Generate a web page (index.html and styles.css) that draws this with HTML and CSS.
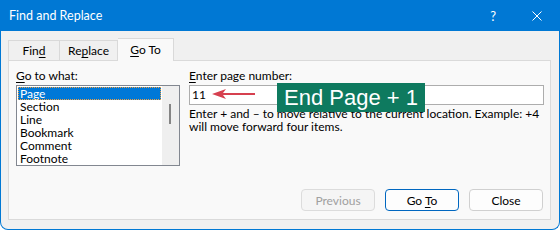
FILE: index.html
```html
<!DOCTYPE html>
<html lang="en">
<head>
  <meta charset="UTF-8" />
  <title>Find and Replace</title>
  <link rel="stylesheet" href="styles.css">
</head>
<body>
  <div class="window">
    <div class="titlebar">
      <span class="title">Find and Replace</span>
      <span class="help">?</span>
      <svg class="close-x" width="10" height="10" viewBox="0 0 10 10">
        <path d="M0.5 0.5 L9.5 9.5 M9.5 0.5 L0.5 9.5" stroke="#fff" stroke-width="1" fill="none" />
      </svg>
    </div>

    <div class="tabs">
      <div class="tab tab-find">Fin<u>d</u></div>
      <div class="tab tab-replace">Re<u>p</u>lace</div>
      <div class="tab active"><u>G</u>o To</div>
    </div>

    <div class="panel">
      <div class="fields">
        <div class="col-left">
          <div class="label"><u>G</u>o to what:</div>
          <div class="listbox">
            <ul class="items">
              <li class="selected">Page</li>
              <li>Section</li>
              <li>Line</li>
              <li>Bookmark</li>
              <li>Comment</li>
              <li>Footnote</li>
            </ul>
            <div class="scrollbar"><div class="thumb"></div></div>
          </div>
        </div>

        <div class="col-right">
          <div class="label"><u>E</u>nter page number:</div>
          <div class="input-wrap">
            <div class="page-input">11</div>
            <!-- annotation on top of the dialog -->
            <svg class="arrow" width="46" height="12" viewBox="0 0 46 12">
              <path d="M1 6 L15 1 L12 5 L44 5 L44 7 L12 7 L15 11 Z" fill="#d6404f" />
            </svg>
            <div class="callout">End Page + 1</div>
          </div>
          <p class="hint">Enter + and &ndash; to move relative to the current location. Example: +4 will move forward four items.</p>
        </div>
      </div>

      <div class="buttons">
        <button class="btn" disabled>Previous</button>
        <button class="btn default">Go <u>T</u>o</button>
        <button class="btn">Close</button>
      </div>
    </div>
  </div>
</body>
</html>
```

FILE: styles.css
```css
body {
  margin: 0;
  padding: 0;
  font-family: Lato, "Noto Sans", sans-serif;
  font-size: 12px;
  color: #000;
  background: #fff;
}
u {
  text-decoration-thickness: 1px;
  text-underline-offset: 2px;
}
.window {
  width: 560px;
  height: 230px;
  box-sizing: border-box;
  border: 1px solid #0078d4;
  border-top: none;
  border-radius: 0 0 8px 8px;
  background: #f0f0f0;
  display: flex;
  flex-direction: column;
  overflow: hidden;
}
.titlebar {
  height: 31px;
  flex: none;
  background: #0078d4;
  color: #fff;
  display: flex;
  align-items: center;
  padding: 0 17px 0 8px;
}
.title {
  flex: 1;
  font-size: 12.5px;
}
.help {
  font-size: 13px;
  margin-right: 36px;
}
.close-x {
  display: block;
}
.tabs {
  display: flex;
  align-items: flex-end;
  margin-top: 7px;
  padding-left: 7px;
  position: relative;
  z-index: 1;
}
.tab {
  height: 20px;
  line-height: 20px;
  box-sizing: border-box;
  border: 1px solid #d9d9d9;
  border-bottom: none;
  text-align: center;
  background: #f0f0f0;
}
.tab-find {
  width: 52px;
}
.tab-replace {
  width: 58px;
  border-left: none;
}
.tab.active {
  width: 56px;
  height: 23px;
  line-height: 22px;
  margin-bottom: -1px;
  border-left: none;
  background: #f9f9f9;
}
.panel {
  flex: 1;
  margin: 0 8px 9px 7px;
  border: 1px solid #dadada;
  background: #f9f9f9;
  padding: 7px 7px 8px 7px;
  display: flex;
  flex-direction: column;
}
.fields {
  display: grid;
  grid-template-columns: 164px 1fr;
  column-gap: 9px;
}
.label {
  line-height: 16px;
  margin-bottom: 1px;
}
.listbox {
  height: 81px;
  box-sizing: border-box;
  border: 1px solid #828790;
  background: #fff;
  display: flex;
}
.items {
  list-style: none;
  margin: 0;
  padding: 1px 0 0 1px;
  flex: 1;
}
.items li {
  height: 13px;
  line-height: 13px;
  padding-left: 2px;
  margin-right: 1px;
}
.items li.selected {
  background: #0078d7;
  color: #fff;
  outline: 1px dotted #f0a040;
  outline-offset: -1px;
}
.scrollbar {
  width: 17px;
  background: #efefef;
  position: relative;
}
.thumb {
  position: absolute;
  left: 7px;
  top: 18px;
  width: 2px;
  height: 20px;
  background: #858585;
}
.input-wrap {
  position: relative;
  margin-right: -1px;
}
.page-input {
  height: 20px;
  box-sizing: border-box;
  border: 1px solid #adadad;
  background: #fff;
  padding-left: 2px;
  line-height: 18px;
}
.arrow {
  position: absolute;
  left: 22px;
  top: 3px;
}
.callout {
  position: absolute;
  left: 88px;
  top: -2px;
  width: 148px;
  height: 29px;
  background: #0e7a5f;
  color: #fff;
  font-family: "Liberation Sans", Arial, sans-serif;
  font-size: 22px;
  line-height: 29px;
  text-align: center;
}
.hint {
  margin: 2px 0 0;
  line-height: 13px;
}
.buttons {
  margin-top: auto;
  display: flex;
  justify-content: flex-end;
  gap: 10px;
}
.btn {
  width: 74px;
  height: 22px;
  box-sizing: border-box;
  border: 1px solid #d0d0d0;
  border-radius: 4px;
  background: #fdfdfd;
  font-family: inherit;
  font-size: 12px;
  color: #000;
  padding: 0;
}
.btn:disabled {
  color: #a0a0a0;
  background: #f5f5f5;
  border-color: #dcdcdc;
}
.btn.default {
  border-color: #0067c0;
}
```
